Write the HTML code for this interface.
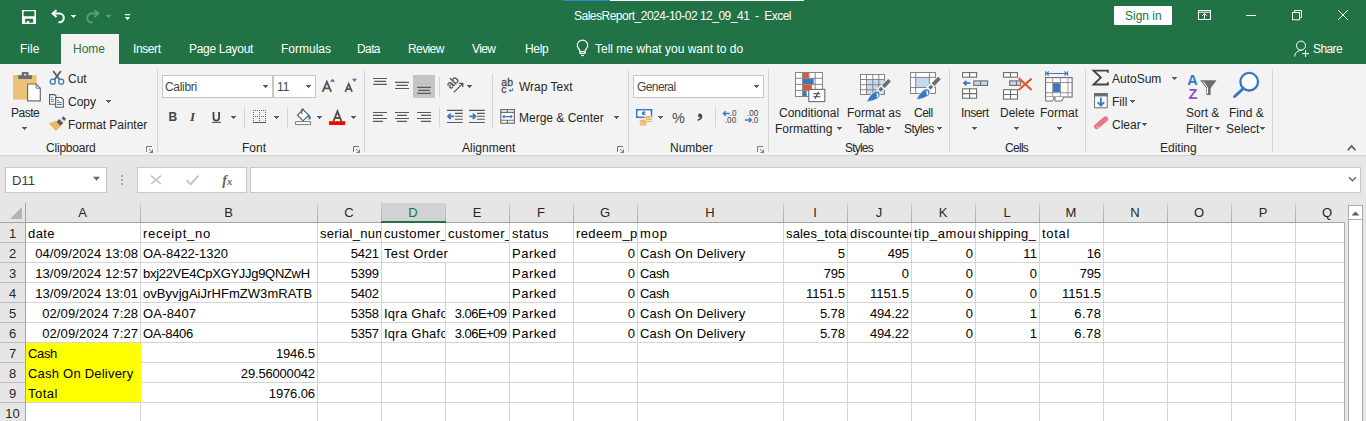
<!DOCTYPE html>
<html><head><meta charset="utf-8">
<style>
*{margin:0;padding:0;box-sizing:border-box}
html,body{width:1366px;height:421px;overflow:hidden;background:#e6e6e6;font-family:"Liberation Sans",sans-serif}
.a{position:absolute}
.t{position:absolute;font-size:12px;line-height:12px;white-space:nowrap;color:#262626}
.w{color:#fff}
.c{position:absolute;font-size:13px;line-height:13px;white-space:nowrap;color:#000;overflow:hidden}
svg{position:absolute;overflow:visible}
.g{color:#262626}
.sep{position:absolute;width:1px;background:#d5d5d5}
</style></head><body>
<!-- title bar + tabs -->
<div class="a" style="left:0;top:0;width:1366px;height:64px;background:#217346"></div>
<div class="a" style="left:563px;top:0;width:241px;height:1px;background:#fff"></div>
<div class="a" style="left:563px;top:0;width:47px;height:1px;background:#2b88d8"></div>
<div class="t w" style="left:574px;top:10px;letter-spacing:-0.5px">SalesReport_2024-10-02 12_09_41&nbsp; -&nbsp; Excel</div>

<!-- title icons -->
<svg style="left:0;top:0" width="1366" height="64">
<g fill="#fff">
<path fill-rule="evenodd" d="M22 10H36V24H22Z M23.6 11.3V16.3H34.4V11.3Z M25.1 18.8V22.7H26.6V20.9H29.2V22.7H33.2V18.8Z"/>
</g>
<g fill="none" stroke="#fff" stroke-width="2">
<path d="M53 13.6H59.5A4.3 4.3 0 0 1 59.5 22.2H58.5"/>
<path d="M56.5 10.2L52.6 13.6L56.5 17"/>
</g>

<g fill="none" stroke="#5c9b76" stroke-width="2">
<path d="M98 13.6H91.5A4.3 4.3 0 0 0 91.5 22.2H92.5"/>
<path d="M94.5 10.2L98.4 13.6L94.5 17"/>
</g>

<path d="M71 15h5v1h-1v1h-1v1h-1v-1h-1v-1h-1Z" fill="#fff"/><path d="M106 15h5v1h-1v1h-1v1h-1v-1h-1v-1h-1Z" fill="#5d9c78"/>
<path d="M124.9 13.9H130.1V15.2H124.9Z M124.8 17H130.2L127.5 20.2Z" fill="#fff"/>
<!-- right controls -->
<g fill="none" stroke="#fff" stroke-width="1">
<rect x="1198.5" y="10.5" width="12" height="9"/>
<path d="M1198.5 12.2H1210.5"/>
<path d="M1204.5 20V13.6 M1202.3 15.8L1204.5 13.6L1206.7 15.8"/>
<path d="M1246 15.5H1256"/>
<rect x="1292.5" y="12.5" width="7" height="7.3"/>
<path d="M1294.5 12.5V10.5H1301.5V17.5H1299.5"/>
<path d="M1338 10L1348 20 M1348 10L1338 20"/>
<path d="M578.8 49A5.2 5.2 0 1 1 586.2 49Q585.2 50.2 585 51.5H580Q579.8 50.2 578.8 49Z" stroke-width="1.25"/>
<path d="M580 51.5V53.5H585V51.5" stroke-width="1.2"/>
<path d="M581 55.5H584" stroke-width="1.2"/>
<circle cx="1301" cy="45.6" r="4.5"/>
<path d="M1294.6 56.6C1295 52.5 1298 50.3 1302 50.3"/>
<path d="M1302.2 53.6H1309 M1305.6 50.2V57"/>
</g>
</svg>
<div class="a" style="left:1114px;top:6px;width:58px;height:19px;background:#fff;border-radius:1px"></div>
<div class="t" style="left:1125px;top:10px;color:#217346">Sign in</div>
<!-- /title icons -->

<!-- ribbon -->
<div class="a" style="left:0;top:64px;width:1366px;height:92px;background:#f3f3f3;border-bottom:1px solid #d5d5d5"></div>
<div class="a" style="left:61px;top:34px;width:58px;height:31px;background:#f3f3f3"></div>
<div class="t w" style="left:20px;top:43px">File</div>
<div class="t" style="left:73px;top:43px;color:#217346">Home</div>
<div class="t w" style="left:133px;top:43px;letter-spacing:-0.4px">Insert</div>
<div class="t w" style="left:189px;top:43px;letter-spacing:-0.3px">Page Layout</div>
<div class="t w" style="left:281px;top:43px">Formulas</div>
<div class="t w" style="left:357px;top:43px;letter-spacing:-0.6px">Data</div>
<div class="t w" style="left:408px;top:43px;letter-spacing:-0.6px">Review</div>
<div class="t w" style="left:472px;top:43px;letter-spacing:-0.6px">View</div>
<div class="t w" style="left:525px;top:43px;letter-spacing:-0.3px">Help</div>
<div class="t w" style="left:595px;top:43px">Tell me what you want to do</div>
<div class="t w" style="left:1313px;top:43px;letter-spacing:-0.6px">Share</div>

<!-- ribbon text -->
<div class="t" style="left:11px;top:107px;letter-spacing:-0.5px">Paste</div>
<div class="t" style="left:68px;top:73px">Cut</div>
<div class="t" style="left:68px;top:96px">Copy</div>
<div class="t" style="left:68px;top:119px">Format Painter</div>
<div class="t g" style="left:46px;top:142px;letter-spacing:-0.2px">Clipboard</div>
<div class="t g" style="left:242px;top:142px">Font</div>
<div class="t g" style="left:462px;top:142px">Alignment</div>
<div class="t g" style="left:670px;top:142px">Number</div>
<div class="t g" style="left:845px;top:142px;letter-spacing:-0.8px">Styles</div>
<div class="t g" style="left:1005px;top:142px;letter-spacing:-0.7px">Cells</div>
<div class="t g" style="left:1160px;top:142px">Editing</div>
<div class="t" style="left:519px;top:81px">Wrap Text</div>
<div class="t" style="left:519px;top:112px">Merge &amp; Center</div>
<div class="t" style="left:779px;top:107px">Conditional</div>
<div class="t" style="left:775px;top:123px">Formatting</div>
<div class="t" style="left:847px;top:107px">Format as</div>
<div class="t" style="left:857px;top:123px;letter-spacing:-0.4px">Table</div>
<div class="t" style="left:914px;top:107px;letter-spacing:-0.5px">Cell</div>
<div class="t" style="left:904px;top:123px;letter-spacing:-0.5px">Styles</div>
<div class="t" style="left:961px;top:107px;letter-spacing:-0.4px">Insert</div>
<div class="t" style="left:1000px;top:107px">Delete</div>
<div class="t" style="left:1040px;top:107px">Format</div>
<div class="t" style="left:1112px;top:73px">AutoSum</div>
<div class="t" style="left:1112px;top:96px">Fill</div>
<div class="t" style="left:1112px;top:119px">Clear</div>
<div class="t" style="left:1186px;top:107px">Sort &amp;</div>
<div class="t" style="left:1186px;top:123px">Filter</div>
<div class="t" style="left:1229px;top:107px">Find &amp;</div>
<div class="t" style="left:1226px;top:123px">Select</div>
<!-- separators -->
<div class="sep" style="left:157px;top:69px;height:83px"></div>
<div class="sep" style="left:364px;top:69px;height:83px"></div>
<div class="sep" style="left:628px;top:69px;height:83px"></div>
<div class="sep" style="left:768px;top:69px;height:83px"></div>
<div class="sep" style="left:949px;top:69px;height:83px"></div>
<div class="sep" style="left:1085px;top:69px;height:83px"></div>
<div class="sep" style="left:1272px;top:69px;height:83px"></div>
<div class="sep" style="left:244px;top:107px;height:21px"></div>
<div class="sep" style="left:287px;top:107px;height:21px"></div>
<div class="sep" style="left:439px;top:77px;height:20px"></div>
<div class="sep" style="left:439px;top:107px;height:20px"></div>
<div class="sep" style="left:492px;top:74px;height:55px"></div>
<div class="sep" style="left:715px;top:107px;height:20px"></div>
<!-- boxes -->
<div class="a" style="left:162px;top:75px;width:111px;height:23px;background:#fff;border:1px solid #c6c6c6"></div>
<div class="a" style="left:273px;top:75px;width:43px;height:23px;background:#fff;border:1px solid #c6c6c6"></div>
<div class="t" style="left:165px;top:81px;color:#444;letter-spacing:-0.3px">Calibri</div>
<div class="t" style="left:277px;top:81px;color:#444">11</div>
<div class="a" style="left:633px;top:75px;width:131px;height:23px;background:#fff;border:1px solid #c6c6c6"></div>
<div class="t" style="left:637px;top:81px;color:#444;letter-spacing:-0.6px">General</div>
<div class="a" style="left:413px;top:75px;width:22px;height:23px;background:#c5c5c5"></div>
<!-- /ribbon text -->

<!-- ribbon icons 1 -->
<svg style="left:0;top:0" width="1366" height="160">
<!-- paste -->
<path d="M13 75H36.6V99.6H13Z" fill="#ebc27a"/>
<path fill-rule="evenodd" d="M18.1 75.3H21.7V72.6Q21.7 72.1 22.2 72.1H28Q28.5 72.1 28.5 72.6V75.3H31.9V79.1H18.1Z M25.1 73.8a1 1 0 1 0 0.01 0Z" fill="#6d6d6d"/>
<path d="M27.6 84H36.2L40.3 88.2V100.9H27.6Z" fill="#fff" stroke="#6d6d6d" stroke-width="1.2"/>
<path d="M36.2 84V88.2H40.3" fill="none" stroke="#6d6d6d" stroke-width="1"/>

<!-- cut -->
<path d="M53.2 71L59.5 79.5 M60.9 71L54.6 79.5" stroke="#5f5f5f" stroke-width="1.9" fill="none"/>
<circle cx="52.8" cy="81.7" r="2.5" fill="#f3f3f3" stroke="#3a78c3" stroke-width="1.3"/>
<circle cx="61.2" cy="81.7" r="2.5" fill="#f3f3f3" stroke="#3a78c3" stroke-width="1.3"/>
<!-- copy -->
<path d="M49.6 94.6H54.6L56 96V104.3H49.6Z" fill="#fff" stroke="#555" stroke-width="1.1"/>
<path d="M51.1 97.4H52.9 M51.1 99.4H54 M51.1 101.4H54" stroke="#3a78c3" stroke-width="1"/>
<path d="M55.7 97.5H61.3L63.3 99.5V107.3H55.7Z" fill="#fff" stroke="#555" stroke-width="1.1"/>
<path d="M57.2 100.6H59 M57.2 102.6H61.8 M57.2 104.5H61.8" stroke="#3a78c3" stroke-width="1"/>
<!-- format painter -->
<path d="M62.4 117.2L65.2 120" stroke="#5f5f5f" stroke-width="2.8"/>
<path d="M57.6 120.6L61.6 124.6" stroke="#5f5f5f" stroke-width="4.8"/>
<path d="M55.4 120.8L60.8 126.2L55.8 131L48.8 123.6Z" fill="#ebb862"/>
<!-- dialog launchers -->
<g fill="none" stroke="#7a7a7a" stroke-width="1">
<path d="M146.5 152V146.5H152"/><path d="M149 149L152.5 152.5M152.5 149.5V152.5H149.5"/>
<path d="M353.5 152V146.5H359"/><path d="M356 149L359.5 152.5M359.5 149.5V152.5H356.5"/>
<path d="M617.5 152V146.5H623"/><path d="M620 149L623.5 152.5M623.5 149.5V152.5H620.5"/>
<path d="M757.5 152V146.5H763"/><path d="M760 149L763.5 152.5M763.5 149.5V152.5H760.5"/>
</g>
<!-- font group -->

<path d="M322.6 91.9L326.9 81.9L331.2 91.9 M324.1 88.4H329.7" fill="none" stroke="#555" stroke-width="1.8"/>
<path d="M329.9 81.8L332.5 78.8L335.1 81.8Z" fill="#3a78c3"/>
<path d="M345.3 91.9L348.7 84L352.1 91.9 M346.5 89.2H350.9" fill="none" stroke="#555" stroke-width="1.7"/>
<path d="M352 78.8H357L354.5 82Z" fill="#3a78c3"/>
<text x="168.6" y="120.8" font-family="Liberation Sans" font-weight="bold" font-size="12" fill="#444">B</text>
<text x="190" y="120.8" font-family="Liberation Serif" font-style="italic" font-weight="bold" font-size="13" fill="#444">I</text>
<path d="M213.5 112V117.5Q213.5 120.7 216.3 120.7Q219.1 120.7 219.1 117.5V112" fill="none" stroke="#444" stroke-width="1.8"/>
<path d="M212 122.4H221" stroke="#444" stroke-width="1"/>

<!-- borders -->
<path d="M253 110h1v1h-1Z M255 110h1v1h-1Z M257 110h1v1h-1Z M259 110h1v1h-1Z M261 110h1v1h-1Z M263 110h1v1h-1Z M265 110h1v1h-1Z M253 116h1v1h-1Z M255 116h1v1h-1Z M257 116h1v1h-1Z M259 116h1v1h-1Z M261 116h1v1h-1Z M263 116h1v1h-1Z M265 116h1v1h-1Z M253 112h1v1h-1Z M253 114h1v1h-1Z M253 118h1v1h-1Z M253 120h1v1h-1Z M259 112h1v1h-1Z M259 114h1v1h-1Z M259 118h1v1h-1Z M259 120h1v1h-1Z M265 112h1v1h-1Z M265 114h1v1h-1Z M265 118h1v1h-1Z M265 120h1v1h-1Z" fill="#6a6a6a"/>
<path d="M253 122h13v1h-13Z" fill="#555"/>
<!-- fill color -->
<path d="M297.5 115.2L303.1 109.6L308.7 115.2L303.1 120.8Z" fill="#fff" stroke="#555" stroke-width="1.1"/>
<path d="M301.8 114.3V109.6Q301.8 109 302.6 109H303.5" fill="none" stroke="#555" stroke-width="1.1"/>
<path d="M307.5 114Q310.6 115 311 117.5Q311 119.8 308.8 119.8Z" fill="#3a78c3"/>
<path d="M295.6 121.6H310.6V124.6H295.6Z" fill="#fff" stroke="#7a7a7a" stroke-width="1"/>
<!-- font color -->
<path d="M333.4 121.4L337.45 111.4L341.5 121.4 M335 118H340" fill="none" stroke="#555" stroke-width="1.9"/>
<path d="M329 121.2H345.2V125H329Z" fill="#f00"/>
</svg>
<!-- /ribbon icons 1 -->

<!-- ribbon icons 2 -->
<svg style="left:0;top:0" width="1366" height="160">
<g stroke="#595959" stroke-width="1.1" fill="none">
<!-- vertical align -->
<path d="M373 78.5H387 M374.2 81.4H386 M373 84.4H387"/>
<path d="M395.1 82.4H409 M396.3 85.4H407.8 M395.1 88.5H409"/>
<path d="M417.1 87.4H431 M418.3 90.4H429.8 M417.1 93.4H431"/>
<!-- horizontal align -->
<path d="M373 112.5H387 M373 115.4H383 M373 118.5H387 M373 121.4H383"/>
<path d="M395 112.5H409 M397 115.4H407 M395 118.5H409 M397 121.4H407"/>
<path d="M417 112.5H431 M421 115.4H431 M417 118.5H431 M421 121.4H431"/>
<!-- indent -->
<path d="M447 110.4H462.8 M455 113.4H462.8 M455 116.3H462.8 M455 119.3H462.8 M447 122.5H462.8"/>
<path d="M469 110.4H484.8 M477 113.4H484.8 M477 116.3H484.8 M477 119.3H484.8 M469 122.5H484.8"/>
</g>
<path d="M448 116.3H454 M450.7 113.6L448 116.3L450.7 119" stroke="#3a78c3" stroke-width="1.8" fill="none"/>
<path d="M469.5 116.3H475.5 M472.8 113.6L475.5 116.3L472.8 119" stroke="#3a78c3" stroke-width="1.8" fill="none"/>
<!-- orientation -->
<text transform="translate(450.6 89.4) rotate(-45)" font-family="Liberation Sans" font-size="11.5" fill="#4a4a4a" stroke="#4a4a4a" stroke-width="0.25">ab</text>
<path d="M453.8 92.3L462.8 83.3 M459.2 83.3H462.8V86.9" stroke="#4a4a4a" stroke-width="1.2" fill="none"/>

<!-- wrap text -->
<text x="501.3" y="86.1" font-family="Liberation Sans" font-size="10.5" fill="#4a4a4a" stroke="#4a4a4a" stroke-width="0.3">ab</text>
<text x="501.3" y="93" font-family="Liberation Sans" font-size="10.5" fill="#4a4a4a" stroke="#4a4a4a" stroke-width="0.3">c</text>
<path d="M512.6 88.3V90.6H509.2 M510.6 89.2L509.2 90.6L510.6 92" stroke="#3a78c3" stroke-width="1" fill="none"/>
<!-- merge -->
<rect x="500.8" y="109.6" width="13.6" height="13.6" fill="#fff" stroke="#6d6d6d" stroke-width="1.2"/>
<path d="M500.8 112.4H514.4 M500.8 120.3H514.4 M507.4 109.6V112.4 M507.4 120.3V123.2" stroke="#6d6d6d" stroke-width="1.1" fill="none"/>
<path d="M503 116.6H512 M504.4 115.2L503 116.6L504.4 118 M510.6 115.2L512 116.6L510.6 118" stroke="#3a78c3" stroke-width="1.1" fill="none"/>

<!-- number -->

<rect x="636.7" y="109.7" width="14.8" height="7.6" fill="#fff" stroke="#3a78c3" stroke-width="1.5"/>
<path d="M636 109H639.3L636 112.3Z M652.2 109H648.9L652.2 112.3Z M636 118H639.3L636 114.7Z" fill="#3a78c3"/>
<circle cx="643.9" cy="113.3" r="2" fill="#3a78c3"/>
<path d="M644 113.3H646.2" stroke="#fff" stroke-width="0.9"/>
<ellipse cx="648.4" cy="117.2" rx="3.7" ry="1.6" fill="#ebb862" stroke="#f3f3f3" stroke-width="0.6"/>
<path d="M644.8 119.4H652 M645.2 121.3H651.6" stroke="#ebb862" stroke-width="1.3"/>
<ellipse cx="643.2" cy="120.9" rx="3.7" ry="1.6" fill="#ebb862" stroke="#f3f3f3" stroke-width="0.6"/>
<path d="M639.6 123H646.8 M640 124.8H646.4" stroke="#ebb862" stroke-width="1.3"/>
<text x="672" y="122.9" font-family="Liberation Sans" font-size="14.5" fill="#4a4a4a">%</text>
<circle cx="700" cy="115.5" r="1.9" fill="#444"/><path d="M701.5 115.8Q701.8 118.8 697.6 120.2" stroke="#444" stroke-width="1.6" fill="none"/>
<text x="729.8" y="116.2" font-family="Liberation Sans" font-size="8.2" fill="#444">.0</text>
<text x="724.8" y="122.9" font-family="Liberation Sans" font-size="8.2" fill="#444">.00</text>
<path d="M723.5 113.5H729.8 M725.8 111.2L723.5 113.5L725.8 115.8" stroke="#3a78c3" stroke-width="1.5" fill="none"/>
<text x="747" y="116.2" font-family="Liberation Sans" font-size="8.2" fill="#444">.00</text>
<text x="751.6" y="122.9" font-family="Liberation Sans" font-size="8.2" fill="#444">.0</text>
<path d="M745 120H751.3 M749 117.7L751.3 120L749 122.3" stroke="#3a78c3" stroke-width="1.5" fill="none"/>
<!-- conditional formatting -->
<rect x="795.5" y="72.5" width="27" height="24" fill="#fff"/>
<g stroke="#7a7a7a" stroke-width="0.9" fill="none">
<rect x="795.5" y="72.5" width="27" height="24"/>
<path d="M802.6 72.5V96.5 M809 72.5V96.5 M815.2 72.5V96.5 M795.5 78.3H822.5 M795.5 84.4H822.5 M795.5 90.4H822.5"/>
</g>
<path d="M802.9 72.9H808.7V78H802.9Z" fill="#e0592b"/>
<path d="M802.9 78.7H813.7V84H802.9Z" fill="#3a78c3"/>
<path d="M802.9 84.8H811.9V90H802.9Z" fill="#e0592b"/>
<path d="M802.9 90.8H806.7V96.1H802.9Z" fill="#3a78c3"/>
<rect x="808.8" y="89.4" width="16" height="12.2" fill="#fff" stroke="#6d6d6d" stroke-width="1.1"/>
<path d="M813.3 93.8H820.3 M813.3 96.8H820.3 M818.6 91.8L815 98.8" stroke="#444" stroke-width="1.1" fill="none"/>

<!-- format as table -->
<rect x="860.5" y="74.5" width="24" height="20" fill="#fff"/>
<rect x="866.5" y="79.5" width="18" height="15" fill="#c5d9ef"/>
<g stroke="#7a7a7a" stroke-width="0.9" fill="none">
<rect x="860.5" y="74.5" width="24" height="20"/>
<path d="M866.5 74.5V94.5 M872.8 74.5V94.5 M878.8 74.5V94.5 M860.5 79.5H884.5 M860.5 84.7H884.5 M860.5 89.8H884.5"/>
</g>
<path d="M890.5 79.5L878.5 91.5" stroke="#f3f3f3" stroke-width="6"/>
<path d="M889.6 80.2L883.2 86.8" stroke="#6d6d6d" stroke-width="3.8"/>
<path d="M882.2 88L879.6 90.6" stroke="#6d6d6d" stroke-width="3.2"/>
<path d="M878.6 91.4Q881.8 94.6 878.2 98.2Q873 101.6 866.4 101.9Q869.2 96.2 872.4 93.2Q875.6 90.2 878.6 91.4Z" fill="#3a78c3" stroke="#f3f3f3" stroke-width="0.8"/>
<path d="M876.6 93.4Q878.6 94.8 877 97" stroke="#fff" stroke-width="1.5" fill="none"/>
<!-- cell styles -->
<rect x="910.5" y="72.5" width="25" height="21" fill="#fff"/>
<rect x="915.7" y="77.4" width="13.7" height="10.1" fill="#c5d9ef"/>
<g stroke="#7a7a7a" stroke-width="0.9" fill="none">
<rect x="910.5" y="72.5" width="25" height="21"/>
<path d="M915.7 72.5V93.5 M929.4 72.5V93.5 M910.5 77.4H935.5 M910.5 87.5H935.5"/>
</g>
<path d="M940.3 77.3L928.3 89.3" stroke="#f3f3f3" stroke-width="6"/>
<path d="M939.4 78L933 84.6" stroke="#6d6d6d" stroke-width="3.8"/>
<path d="M932 85.8L929.4 88.4" stroke="#6d6d6d" stroke-width="3.2"/>
<path d="M928.4 89.2Q931.6 92.4 928 96Q922.8 99.4 916.2 99.7Q919 94 922.2 91Q925.4 88 928.4 89.2Z" fill="#3a78c3" stroke="#f3f3f3" stroke-width="0.8"/>
<path d="M926.4 91.2Q928.4 92.6 926.8 94.8" stroke="#fff" stroke-width="1.5" fill="none"/>
<!-- cells: insert -->
<g stroke="#6d6d6d" stroke-width="1.1">
<rect x="962.6" y="72.6" width="14" height="4.6" fill="#fff"/>
<path d="M969.6 72.6V77.2"/>
<rect x="973.8" y="80.9" width="13.8" height="4.5" fill="#c5d9ef"/>
<path d="M980.6 80.9V85.4"/>
<rect x="962.6" y="88.8" width="14" height="9.4" fill="#fff"/>
<path d="M969.6 88.8V98.2 M962.6 93.6H976.6"/>
<!-- delete -->
<rect x="1003.5" y="72.6" width="14" height="4.6" fill="#fff"/>
<path d="M1010.5 72.6V77.2"/>
<rect x="1009.7" y="80.9" width="11" height="4.5" fill="#c5d9ef"/>
<path d="M1016.5 80.9V85.4"/>
<rect x="1003.5" y="89.7" width="14" height="9.4" fill="#fff"/>
<path d="M1010.5 89.7V99.1 M1003.5 94.5H1017.5"/>
</g>
<path d="M970.4 83.1H964 M966.4 80.8L964 83.1L966.4 85.4" stroke="#3a78c3" stroke-width="1.8" fill="none"/>
<path d="M1018.6 78L1031.6 90 M1031.6 78.6L1018.6 90" stroke="#e0592b" stroke-width="2.1" fill="none"/>
<!-- format -->
<path d="M1045.6 71.2V75.8 M1067.6 71.2V75.8 M1046.5 73.5H1066.7 M1048.8 71.5L1046.6 73.5L1048.8 75.5 M1064.4 71.5L1066.6 73.5L1064.4 75.5" stroke="#3a78c3" stroke-width="1.1" fill="none"/>
<rect x="1045.6" y="77.6" width="26.5" height="19.4" fill="#fff" stroke="#6d6d6d" stroke-width="1.1"/>
<rect x="1053" y="83.1" width="7.3" height="9" fill="#3a78c3"/>
<path d="M1052.7 77.6V97 M1060.4 77.6V97 M1068 77.6V97 M1045.6 82.5H1072.1 M1045.6 92.7H1072.1" stroke="#8a8a8a" stroke-width="0.9" fill="none"/>
<path d="M1045.6 97V101H1052.7L1054 97 M1055 97V101H1062L1063.5 97" stroke="#6d6d6d" stroke-width="1" fill="#fff"/>

<!-- editing -->
<path d="M1107.8 72.8V70.6H1093.6L1100.8 77.6L1093.6 84.5H1107.8V82.3" stroke="#444" stroke-width="1.9" fill="none"/>

<rect x="1094.6" y="93.6" width="12.6" height="14.2" fill="#fff" stroke="#6d6d6d" stroke-width="1"/>
<rect x="1094.1" y="93.1" width="13.6" height="3.3" fill="#6d6d6d"/>
<path d="M1100.9 97.5V105.4 M1097.6 102.2L1100.9 105.6L1104.2 102.2" stroke="#3a78c3" stroke-width="1.8" fill="none"/>
<path d="M1096.7 126.5L1105.5 119" stroke="#e8768a" stroke-width="5.3" stroke-linecap="round"/>
<path d="M1098.8 128.2L1096.7 126.4" stroke="#f3f3f3" stroke-width="1"/>
<text x="1187.2" y="84.7" font-family="Liberation Sans" font-weight="bold" font-size="14.5" fill="#3a78c3">A</text>
<text x="1188.5" y="98.8" font-family="Liberation Sans" font-weight="bold" font-size="14.5" fill="#8e4ec6">Z</text>
<path d="M1200.2 80.2H1216.6L1210.6 88.2V95H1206.4V88.2Z" fill="#6d6d6d"/>
<path d="M1203 81.6L1207.5 87.6V93.7" stroke="#fff" stroke-width="1" fill="none"/>
<circle cx="1249.2" cy="81.7" r="8.8" fill="#fff" stroke="#3a78c3" stroke-width="2.3"/>
<path d="M1243.2 88.6L1234.6 96.5" stroke="#3a78c3" stroke-width="3" stroke-linecap="round"/>

<path d="M1347.8 150.2L1351.6 146L1355.4 150.2" stroke="#555" stroke-width="1.6" fill="none"/>
<!-- arrows -->
<path d="M22 127h5v1h-1v1h-1v1h-1v-1h-1v-1h-1Z M263 85h5v1h-1v1h-1v1h-1v-1h-1v-1h-1Z M306 85h5v1h-1v1h-1v1h-1v-1h-1v-1h-1Z M231 116h5v1h-1v1h-1v1h-1v-1h-1v-1h-1Z M274 116h5v1h-1v1h-1v1h-1v-1h-1v-1h-1Z M317 116h5v1h-1v1h-1v1h-1v-1h-1v-1h-1Z M351 116h5v1h-1v1h-1v1h-1v-1h-1v-1h-1Z M467 85h5v1h-1v1h-1v1h-1v-1h-1v-1h-1Z M614 116h5v1h-1v1h-1v1h-1v-1h-1v-1h-1Z M754 85h5v1h-1v1h-1v1h-1v-1h-1v-1h-1Z M658 116h5v1h-1v1h-1v1h-1v-1h-1v-1h-1Z M837 127h5v1h-1v1h-1v1h-1v-1h-1v-1h-1Z M886 127h5v1h-1v1h-1v1h-1v-1h-1v-1h-1Z M937 127h5v1h-1v1h-1v1h-1v-1h-1v-1h-1Z M972 127h5v1h-1v1h-1v1h-1v-1h-1v-1h-1Z M1014 127h5v1h-1v1h-1v1h-1v-1h-1v-1h-1Z M1057 127h5v1h-1v1h-1v1h-1v-1h-1v-1h-1Z M1172 77h5v1h-1v1h-1v1h-1v-1h-1v-1h-1Z M1130 100h5v1h-1v1h-1v1h-1v-1h-1v-1h-1Z M1142 123h5v1h-1v1h-1v1h-1v-1h-1v-1h-1Z M1215 127h5v1h-1v1h-1v1h-1v-1h-1v-1h-1Z M1260 127h5v1h-1v1h-1v1h-1v-1h-1v-1h-1Z M106 100h5v1h-1v1h-1v1h-1v-1h-1v-1h-1Z" fill="#5a5a5a"/>

</svg>
<!-- /ribbon icons 2 -->

<!-- formula bar -->
<div class="a" style="left:5px;top:167px;width:102px;height:26px;background:#fff;border:1px solid #c6c6c6"></div>
<div class="c" style="left:12px;top:174px;color:#3c3c3c">D11</div>
<div class="a" style="left:137px;top:167px;width:110px;height:26px;background:#fff;border:1px solid #c6c6c6"></div>
<div class="a" style="left:250px;top:167px;width:1111px;height:26px;background:#fff;border:1px solid #c6c6c6"></div>

<svg style="left:0;top:0" width="1366" height="200">
<path d="M93 176.7H100L96.5 180.8Z" fill="#666"/>
<path d="M121 175h2v2h-2Z M121 179h2v2h-2Z M121 183h2v2h-2Z" fill="#a6a6a6"/>
<path d="M151 175.6L161 184 M161 175.6L151 184" stroke="#c2c2c2" stroke-width="1.5" fill="none"/>
<path d="M186.6 180.2L190.6 184.3L198.3 175.6" stroke="#c2c2c2" stroke-width="1.9" fill="none"/>
<text x="222.3" y="184.6" font-family="Liberation Serif" font-style="italic" font-weight="bold" font-size="14" fill="#666">f</text>
<text x="227" y="184.6" font-family="Liberation Serif" font-style="italic" font-weight="bold" font-size="10.5" fill="#666">x</text>
<path d="M1349 177.3L1352.4 180.7L1355.8 177.3" stroke="#666" stroke-width="1.6" fill="none"/>
</svg>
<!-- grid -->
<div class="a" style="left:0;top:203px;width:1345px;height:19px;background:#e6e6e6"></div>
<svg style="left:0;top:0" width="1" height="1"><path d="M22 207 L22 219 L10 219 Z" fill="#b4b4b4"/></svg>
<div class="a" style="left:26px;top:223px;width:1318px;height:198px;background:#fff"></div>
<div class="a" style="left:0;top:223px;width:25px;height:198px;background:#e6e6e6"></div>
<div class="a" style="left:382px;top:203px;width:63px;height:19px;background:#d2d2d2"></div>
<div class="a" style="left:25px;top:203px;width:1px;height:19px;background:linear-gradient(#cfcfcf,#a9a9a9)"></div>
<div class="a" style="left:140px;top:203px;width:1px;height:19px;background:linear-gradient(#cfcfcf,#a9a9a9)"></div>
<div class="a" style="left:317px;top:203px;width:1px;height:19px;background:linear-gradient(#cfcfcf,#a9a9a9)"></div>
<div class="a" style="left:381px;top:203px;width:1px;height:19px;background:linear-gradient(#cfcfcf,#a9a9a9)"></div>
<div class="a" style="left:445px;top:203px;width:1px;height:19px;background:linear-gradient(#cfcfcf,#a9a9a9)"></div>
<div class="a" style="left:509px;top:203px;width:1px;height:19px;background:linear-gradient(#cfcfcf,#a9a9a9)"></div>
<div class="a" style="left:573px;top:203px;width:1px;height:19px;background:linear-gradient(#cfcfcf,#a9a9a9)"></div>
<div class="a" style="left:637px;top:203px;width:1px;height:19px;background:linear-gradient(#cfcfcf,#a9a9a9)"></div>
<div class="a" style="left:783px;top:203px;width:1px;height:19px;background:linear-gradient(#cfcfcf,#a9a9a9)"></div>
<div class="a" style="left:847px;top:203px;width:1px;height:19px;background:linear-gradient(#cfcfcf,#a9a9a9)"></div>
<div class="a" style="left:911px;top:203px;width:1px;height:19px;background:linear-gradient(#cfcfcf,#a9a9a9)"></div>
<div class="a" style="left:975px;top:203px;width:1px;height:19px;background:linear-gradient(#cfcfcf,#a9a9a9)"></div>
<div class="a" style="left:1039px;top:203px;width:1px;height:19px;background:linear-gradient(#cfcfcf,#a9a9a9)"></div>
<div class="a" style="left:1103px;top:203px;width:1px;height:19px;background:linear-gradient(#cfcfcf,#a9a9a9)"></div>
<div class="a" style="left:1167px;top:203px;width:1px;height:19px;background:linear-gradient(#cfcfcf,#a9a9a9)"></div>
<div class="a" style="left:1231px;top:203px;width:1px;height:19px;background:linear-gradient(#cfcfcf,#a9a9a9)"></div>
<div class="a" style="left:1295px;top:203px;width:1px;height:19px;background:linear-gradient(#cfcfcf,#a9a9a9)"></div>
<div class="a" style="left:0;top:222px;width:1345px;height:1px;background:#a3a3a3"></div>
<div class="a" style="left:381px;top:221px;width:65px;height:2px;background:#217346"></div>
<div class="a" style="left:25px;top:203px;width:1px;height:218px;background:#a3a3a3"></div>
<div class="a" style="left:140px;top:223px;width:1px;height:198px;background:#d4d4d4"></div>
<div class="a" style="left:317px;top:223px;width:1px;height:198px;background:#d4d4d4"></div>
<div class="a" style="left:381px;top:223px;width:1px;height:198px;background:#d4d4d4"></div>
<div class="a" style="left:445px;top:223px;width:1px;height:198px;background:#d4d4d4"></div>
<div class="a" style="left:509px;top:223px;width:1px;height:198px;background:#d4d4d4"></div>
<div class="a" style="left:573px;top:223px;width:1px;height:198px;background:#d4d4d4"></div>
<div class="a" style="left:637px;top:223px;width:1px;height:198px;background:#d4d4d4"></div>
<div class="a" style="left:783px;top:223px;width:1px;height:198px;background:#d4d4d4"></div>
<div class="a" style="left:847px;top:223px;width:1px;height:198px;background:#d4d4d4"></div>
<div class="a" style="left:911px;top:223px;width:1px;height:198px;background:#d4d4d4"></div>
<div class="a" style="left:975px;top:223px;width:1px;height:198px;background:#d4d4d4"></div>
<div class="a" style="left:1039px;top:223px;width:1px;height:198px;background:#d4d4d4"></div>
<div class="a" style="left:1103px;top:223px;width:1px;height:198px;background:#d4d4d4"></div>
<div class="a" style="left:1167px;top:223px;width:1px;height:198px;background:#d4d4d4"></div>
<div class="a" style="left:1231px;top:223px;width:1px;height:198px;background:#d4d4d4"></div>
<div class="a" style="left:1295px;top:223px;width:1px;height:198px;background:#d4d4d4"></div>
<div class="a" style="left:0;top:242px;width:25px;height:1px;background:#bcbcbc"></div>
<div class="a" style="left:26px;top:242px;width:1318px;height:1px;background:#d4d4d4"></div>
<div class="a" style="left:0;top:262px;width:25px;height:1px;background:#bcbcbc"></div>
<div class="a" style="left:26px;top:262px;width:1318px;height:1px;background:#d4d4d4"></div>
<div class="a" style="left:0;top:282px;width:25px;height:1px;background:#bcbcbc"></div>
<div class="a" style="left:26px;top:282px;width:1318px;height:1px;background:#d4d4d4"></div>
<div class="a" style="left:0;top:302px;width:25px;height:1px;background:#bcbcbc"></div>
<div class="a" style="left:26px;top:302px;width:1318px;height:1px;background:#d4d4d4"></div>
<div class="a" style="left:0;top:322px;width:25px;height:1px;background:#bcbcbc"></div>
<div class="a" style="left:26px;top:322px;width:1318px;height:1px;background:#d4d4d4"></div>
<div class="a" style="left:0;top:342px;width:25px;height:1px;background:#bcbcbc"></div>
<div class="a" style="left:26px;top:342px;width:1318px;height:1px;background:#d4d4d4"></div>
<div class="a" style="left:0;top:362px;width:25px;height:1px;background:#bcbcbc"></div>
<div class="a" style="left:26px;top:362px;width:1318px;height:1px;background:#d4d4d4"></div>
<div class="a" style="left:0;top:382px;width:25px;height:1px;background:#bcbcbc"></div>
<div class="a" style="left:26px;top:382px;width:1318px;height:1px;background:#d4d4d4"></div>
<div class="a" style="left:0;top:402px;width:25px;height:1px;background:#bcbcbc"></div>
<div class="a" style="left:26px;top:402px;width:1318px;height:1px;background:#d4d4d4"></div>
<div class="a" style="left:1344px;top:222px;width:1px;height:199px;background:#ababab"></div>
<div class="t" style="font-size:13px;line-height:13px;left:25px;top:206px;width:115px;text-align:center;color:#262626">A</div>
<div class="t" style="font-size:13px;line-height:13px;left:140px;top:206px;width:177px;text-align:center;color:#262626">B</div>
<div class="t" style="font-size:13px;line-height:13px;left:317px;top:206px;width:64px;text-align:center;color:#262626">C</div>
<div class="t" style="font-size:13px;line-height:13px;left:381px;top:206px;width:64px;text-align:center;color:#217346">D</div>
<div class="t" style="font-size:13px;line-height:13px;left:445px;top:206px;width:64px;text-align:center;color:#262626">E</div>
<div class="t" style="font-size:13px;line-height:13px;left:509px;top:206px;width:64px;text-align:center;color:#262626">F</div>
<div class="t" style="font-size:13px;line-height:13px;left:573px;top:206px;width:64px;text-align:center;color:#262626">G</div>
<div class="t" style="font-size:13px;line-height:13px;left:637px;top:206px;width:146px;text-align:center;color:#262626">H</div>
<div class="t" style="font-size:13px;line-height:13px;left:783px;top:206px;width:64px;text-align:center;color:#262626">I</div>
<div class="t" style="font-size:13px;line-height:13px;left:847px;top:206px;width:64px;text-align:center;color:#262626">J</div>
<div class="t" style="font-size:13px;line-height:13px;left:911px;top:206px;width:64px;text-align:center;color:#262626">K</div>
<div class="t" style="font-size:13px;line-height:13px;left:975px;top:206px;width:64px;text-align:center;color:#262626">L</div>
<div class="t" style="font-size:13px;line-height:13px;left:1039px;top:206px;width:64px;text-align:center;color:#262626">M</div>
<div class="t" style="font-size:13px;line-height:13px;left:1103px;top:206px;width:64px;text-align:center;color:#262626">N</div>
<div class="t" style="font-size:13px;line-height:13px;left:1167px;top:206px;width:64px;text-align:center;color:#262626">O</div>
<div class="t" style="font-size:13px;line-height:13px;left:1231px;top:206px;width:64px;text-align:center;color:#262626">P</div>
<div class="t" style="font-size:13px;line-height:13px;left:1295px;top:206px;width:64px;text-align:center;color:#262626">Q</div>
<div class="t" style="font-size:13px;line-height:13px;left:0;top:227px;width:25px;text-align:center;color:#262626">1</div>
<div class="t" style="font-size:13px;line-height:13px;left:0;top:247px;width:25px;text-align:center;color:#262626">2</div>
<div class="t" style="font-size:13px;line-height:13px;left:0;top:267px;width:25px;text-align:center;color:#262626">3</div>
<div class="t" style="font-size:13px;line-height:13px;left:0;top:287px;width:25px;text-align:center;color:#262626">4</div>
<div class="t" style="font-size:13px;line-height:13px;left:0;top:307px;width:25px;text-align:center;color:#262626">5</div>
<div class="t" style="font-size:13px;line-height:13px;left:0;top:327px;width:25px;text-align:center;color:#262626">6</div>
<div class="t" style="font-size:13px;line-height:13px;left:0;top:347px;width:25px;text-align:center;color:#262626">7</div>
<div class="t" style="font-size:13px;line-height:13px;left:0;top:367px;width:25px;text-align:center;color:#262626">8</div>
<div class="t" style="font-size:13px;line-height:13px;left:0;top:387px;width:25px;text-align:center;color:#262626">9</div>
<div class="t" style="font-size:13px;line-height:13px;left:0;top:407px;width:25px;text-align:center;color:#262626">10</div>
<div class="a" style="left:445px;top:243px;width:1px;height:19px;background:#fff"></div>
<div class="a" style="left:26px;top:343px;width:115px;height:59px;background:#ffff00"></div>
<div class="c" style="left:26px;top:227px;width:114px;height:15px;padding-left:2px;letter-spacing:0.425px">date</div>
<div class="c" style="left:141px;top:227px;width:176px;height:15px;padding-left:2px;letter-spacing:0.729px">receipt_no</div>
<div class="c" style="left:318px;top:227px;width:63px;height:15px;padding-left:2px;letter-spacing:0.279px">serial_number</div>
<div class="c" style="left:382px;top:227px;width:63px;height:15px;padding-left:2px;letter-spacing:0.369px">customer_name</div>
<div class="c" style="left:446px;top:227px;width:63px;height:15px;padding-left:2px;letter-spacing:0.440px">customer_phone</div>
<div class="c" style="left:510px;top:227px;width:63px;height:15px;padding-left:2px;letter-spacing:0.386px">status</div>
<div class="c" style="left:574px;top:227px;width:63px;height:15px;padding-left:2px;letter-spacing:0.385px">redeem_points</div>
<div class="c" style="left:638px;top:227px;width:145px;height:15px;padding-left:2px;letter-spacing:0.904px">mop</div>
<div class="c" style="left:784px;top:227px;width:63px;height:15px;padding-left:2px;letter-spacing:0.168px">sales_total</div>
<div class="c" style="left:848px;top:227px;width:63px;height:15px;padding-left:2px;letter-spacing:0.412px">discounted</div>
<div class="c" style="left:912px;top:227px;width:63px;height:15px;padding-left:2px;letter-spacing:0.668px">tip_amount</div>
<div class="c" style="left:976px;top:227px;width:63px;height:15px;padding-left:2px;letter-spacing:0.260px">shipping_</div>
<div class="c" style="left:1040px;top:227px;width:63px;height:15px;padding-left:2px;letter-spacing:0.686px">total</div>
<div class="c" style="left:26px;top:247px;width:114px;height:15px;text-align:right;padding-right:1.888px;letter-spacing:0.112px">04/09/2024 13:08</div>
<div class="c" style="left:141px;top:247px;width:176px;height:15px;padding-left:2px;letter-spacing:-0.037px">OA-8422-1320</div>
<div class="c" style="left:318px;top:247px;width:63px;height:15px;text-align:right;padding-right:2.230px;letter-spacing:-0.230px">5421</div>
<div class="c" style="left:382px;top:247px;width:127px;height:15px;padding-left:2px;letter-spacing:0.354px">Test Order</div>
<div class="c" style="left:510px;top:247px;width:63px;height:15px;padding-left:2px;letter-spacing:0.535px">Parked</div>
<div class="c" style="left:574px;top:247px;width:63px;height:15px;text-align:right;padding-right:2.230px;letter-spacing:-0.230px">0</div>
<div class="c" style="left:638px;top:247px;width:145px;height:15px;padding-left:2px;letter-spacing:0.219px">Cash On Delivery</div>
<div class="c" style="left:784px;top:247px;width:63px;height:15px;text-align:right;padding-right:2.230px;letter-spacing:-0.230px">5</div>
<div class="c" style="left:848px;top:247px;width:63px;height:15px;text-align:right;padding-right:2.230px;letter-spacing:-0.230px">495</div>
<div class="c" style="left:912px;top:247px;width:63px;height:15px;text-align:right;padding-right:2.230px;letter-spacing:-0.230px">0</div>
<div class="c" style="left:976px;top:247px;width:63px;height:15px;text-align:right;padding-right:1.748px;letter-spacing:0.252px">11</div>
<div class="c" style="left:1040px;top:247px;width:63px;height:15px;text-align:right;padding-right:2.230px;letter-spacing:-0.230px">16</div>
<div class="c" style="left:26px;top:267px;width:114px;height:15px;text-align:right;padding-right:1.888px;letter-spacing:0.112px">13/09/2024 12:57</div>
<div class="c" style="left:141px;top:267px;width:176px;height:15px;padding-left:2px;letter-spacing:-0.301px">bxj22VE4CpXGYJJg9QNZwH</div>
<div class="c" style="left:318px;top:267px;width:63px;height:15px;text-align:right;padding-right:2.230px;letter-spacing:-0.230px">5399</div>
<div class="c" style="left:510px;top:267px;width:63px;height:15px;padding-left:2px;letter-spacing:0.535px">Parked</div>
<div class="c" style="left:574px;top:267px;width:63px;height:15px;text-align:right;padding-right:2.230px;letter-spacing:-0.230px">0</div>
<div class="c" style="left:638px;top:267px;width:145px;height:15px;padding-left:2px;letter-spacing:-0.337px">Cash</div>
<div class="c" style="left:784px;top:267px;width:63px;height:15px;text-align:right;padding-right:2.230px;letter-spacing:-0.230px">795</div>
<div class="c" style="left:848px;top:267px;width:63px;height:15px;text-align:right;padding-right:2.230px;letter-spacing:-0.230px">0</div>
<div class="c" style="left:912px;top:267px;width:63px;height:15px;text-align:right;padding-right:2.230px;letter-spacing:-0.230px">0</div>
<div class="c" style="left:976px;top:267px;width:63px;height:15px;text-align:right;padding-right:2.230px;letter-spacing:-0.230px">0</div>
<div class="c" style="left:1040px;top:267px;width:63px;height:15px;text-align:right;padding-right:2.230px;letter-spacing:-0.230px">795</div>
<div class="c" style="left:26px;top:287px;width:114px;height:15px;text-align:right;padding-right:1.888px;letter-spacing:0.112px">13/09/2024 13:01</div>
<div class="c" style="left:141px;top:287px;width:176px;height:15px;padding-left:2px;letter-spacing:0.053px">ovByvjgAiJrHFmZW3mRATB</div>
<div class="c" style="left:318px;top:287px;width:63px;height:15px;text-align:right;padding-right:2.230px;letter-spacing:-0.230px">5402</div>
<div class="c" style="left:510px;top:287px;width:63px;height:15px;padding-left:2px;letter-spacing:0.535px">Parked</div>
<div class="c" style="left:574px;top:287px;width:63px;height:15px;text-align:right;padding-right:2.230px;letter-spacing:-0.230px">0</div>
<div class="c" style="left:638px;top:287px;width:145px;height:15px;padding-left:2px;letter-spacing:-0.337px">Cash</div>
<div class="c" style="left:784px;top:287px;width:63px;height:15px;text-align:right;padding-right:1.966px;letter-spacing:0.034px">1151.5</div>
<div class="c" style="left:848px;top:287px;width:63px;height:15px;text-align:right;padding-right:1.966px;letter-spacing:0.034px">1151.5</div>
<div class="c" style="left:912px;top:287px;width:63px;height:15px;text-align:right;padding-right:2.230px;letter-spacing:-0.230px">0</div>
<div class="c" style="left:976px;top:287px;width:63px;height:15px;text-align:right;padding-right:2.230px;letter-spacing:-0.230px">0</div>
<div class="c" style="left:1040px;top:287px;width:63px;height:15px;text-align:right;padding-right:1.966px;letter-spacing:0.034px">1151.5</div>
<div class="c" style="left:26px;top:307px;width:114px;height:15px;text-align:right;padding-right:1.865px;letter-spacing:0.135px">02/09/2024 7:28</div>
<div class="c" style="left:141px;top:307px;width:176px;height:15px;padding-left:2px;letter-spacing:0.176px">OA-8407</div>
<div class="c" style="left:318px;top:307px;width:63px;height:15px;text-align:right;padding-right:2.230px;letter-spacing:-0.230px">5358</div>
<div class="c" style="left:382px;top:307px;width:63px;height:15px;padding-left:2px;letter-spacing:0.251px">Iqra Ghafoor</div>
<div class="c" style="left:446px;top:307px;width:63px;height:15px;text-align:right;padding-right:2.535px;letter-spacing:-0.535px">3.06E+09</div>
<div class="c" style="left:510px;top:307px;width:63px;height:15px;padding-left:2px;letter-spacing:0.535px">Parked</div>
<div class="c" style="left:574px;top:307px;width:63px;height:15px;text-align:right;padding-right:2.230px;letter-spacing:-0.230px">0</div>
<div class="c" style="left:638px;top:307px;width:145px;height:15px;padding-left:2px;letter-spacing:0.219px">Cash On Delivery</div>
<div class="c" style="left:784px;top:307px;width:63px;height:15px;text-align:right;padding-right:2.075px;letter-spacing:-0.075px">5.78</div>
<div class="c" style="left:848px;top:307px;width:63px;height:15px;text-align:right;padding-right:2.127px;letter-spacing:-0.127px">494.22</div>
<div class="c" style="left:912px;top:307px;width:63px;height:15px;text-align:right;padding-right:2.230px;letter-spacing:-0.230px">0</div>
<div class="c" style="left:976px;top:307px;width:63px;height:15px;text-align:right;padding-right:2.230px;letter-spacing:-0.230px">1</div>
<div class="c" style="left:1040px;top:307px;width:63px;height:15px;text-align:right;padding-right:1.542px;letter-spacing:0.458px">6.78</div>
<div class="c" style="left:26px;top:327px;width:114px;height:15px;text-align:right;padding-right:1.865px;letter-spacing:0.135px">02/09/2024 7:27</div>
<div class="c" style="left:141px;top:327px;width:176px;height:15px;padding-left:2px;letter-spacing:-0.290px">OA-8406</div>
<div class="c" style="left:318px;top:327px;width:63px;height:15px;text-align:right;padding-right:2.230px;letter-spacing:-0.230px">5357</div>
<div class="c" style="left:382px;top:327px;width:63px;height:15px;padding-left:2px;letter-spacing:0.251px">Iqra Ghafoor</div>
<div class="c" style="left:446px;top:327px;width:63px;height:15px;text-align:right;padding-right:2.535px;letter-spacing:-0.535px">3.06E+09</div>
<div class="c" style="left:510px;top:327px;width:63px;height:15px;padding-left:2px;letter-spacing:0.535px">Parked</div>
<div class="c" style="left:574px;top:327px;width:63px;height:15px;text-align:right;padding-right:2.230px;letter-spacing:-0.230px">0</div>
<div class="c" style="left:638px;top:327px;width:145px;height:15px;padding-left:2px;letter-spacing:0.219px">Cash On Delivery</div>
<div class="c" style="left:784px;top:327px;width:63px;height:15px;text-align:right;padding-right:2.075px;letter-spacing:-0.075px">5.78</div>
<div class="c" style="left:848px;top:327px;width:63px;height:15px;text-align:right;padding-right:2.127px;letter-spacing:-0.127px">494.22</div>
<div class="c" style="left:912px;top:327px;width:63px;height:15px;text-align:right;padding-right:2.230px;letter-spacing:-0.230px">0</div>
<div class="c" style="left:976px;top:327px;width:63px;height:15px;text-align:right;padding-right:2.230px;letter-spacing:-0.230px">1</div>
<div class="c" style="left:1040px;top:327px;width:63px;height:15px;text-align:right;padding-right:1.542px;letter-spacing:0.458px">6.78</div>
<div class="c" style="left:26px;top:347px;width:114px;height:15px;padding-left:2px;letter-spacing:-0.337px">Cash</div>
<div class="c" style="left:141px;top:347px;width:176px;height:15px;text-align:right;padding-right:2.127px;letter-spacing:-0.127px">1946.5</div>
<div class="c" style="left:26px;top:367px;width:114px;height:15px;padding-left:2px;letter-spacing:0.219px">Cash On Delivery</div>
<div class="c" style="left:141px;top:367px;width:176px;height:15px;text-align:right;padding-right:2.174px;letter-spacing:-0.174px">29.56000042</div>
<div class="c" style="left:26px;top:387px;width:114px;height:15px;padding-left:2px;letter-spacing:0.508px">Total</div>
<div class="c" style="left:141px;top:387px;width:176px;height:15px;text-align:right;padding-right:2.142px;letter-spacing:-0.142px">1976.06</div>
<div class="a" style="left:1348px;top:205px;width:15px;height:230px;background:#fff;border:1px solid #ababab"></div>
<div class="a" style="left:1348px;top:219px;width:15px;height:1px;background:#ababab"></div>
<svg style="left:0;top:0" width="1" height="1"><path d="M1351.5 215.5 L1355.5 211.5 L1359.5 215.5 Z" fill="#606060"/></svg>
<!-- /grid -->
</body></html>
